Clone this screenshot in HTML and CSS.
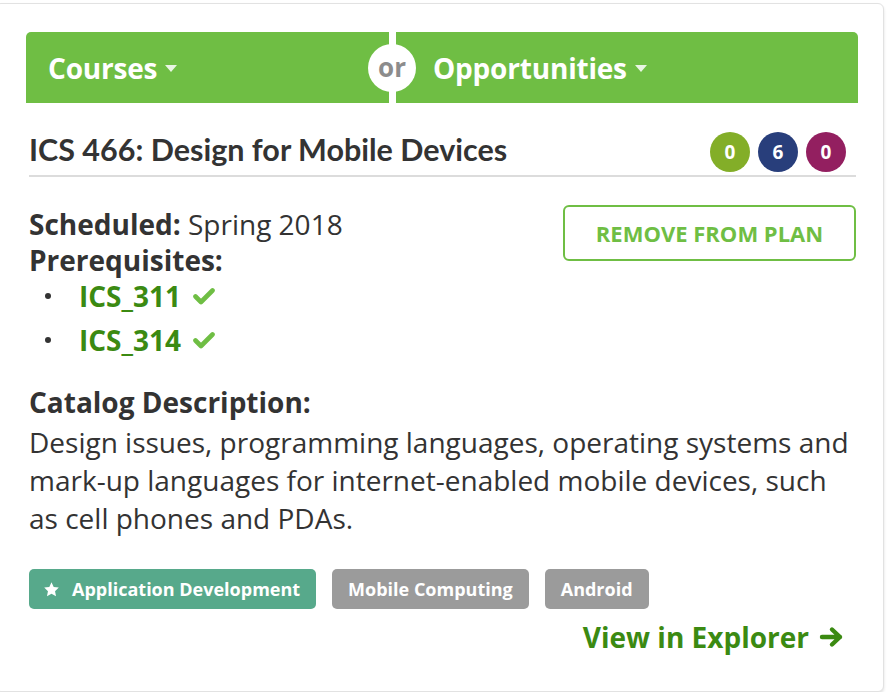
FILE: index.html
```html
<!DOCTYPE html>
<html lang="en">
<head>
<meta charset="utf-8">
<title>ICS 466</title>
<link rel="stylesheet" href="styles.css">
</head>
<body>
<div class="card">
  <div class="switcher">
    <div class="seg seg-left">Courses <span class="caret"></span></div>
    <div class="seg seg-right">Opportunities <span class="caret"></span></div>
    <div class="or">or</div>
  </div>
  <div class="content">
    <div class="title-row">
      <h2 class="title">ICS 466: Design for Mobile Devices</h2>
      <div class="counts">
        <span class="count c-green">0</span>
        <span class="count c-navy">6</span>
        <span class="count c-plum">0</span>
      </div>
    </div>
    <div class="details">
      <div class="meta">
        <div class="line"><b>Scheduled:</b> Spring 2018</div>
        <div class="line"><b>Prerequisites:</b></div>
        <ul class="prereqs">
          <li><a class="course-link">ICS_311</a><svg class="check" viewBox="0 0 24 18" width="24" height="18"><polyline points="3.5,9.5 9,15 20.5,3.5" fill="none" stroke="#6fbe44" stroke-width="4.6" stroke-linecap="round" stroke-linejoin="round"/></svg></li>
          <li><a class="course-link">ICS_314</a><svg class="check" viewBox="0 0 24 18" width="24" height="18"><polyline points="3.5,9.5 9,15 20.5,3.5" fill="none" stroke="#6fbe44" stroke-width="4.6" stroke-linecap="round" stroke-linejoin="round"/></svg></li>
        </ul>
      </div>
      <button class="remove-btn">REMOVE FROM PLAN</button>
    </div>
    <div class="desc">
      <div class="line"><b>Catalog Description:</b></div>
      <p class="desc-text">Design issues, programming languages, operating systems and mark-up languages for internet-enabled mobile devices, such as cell phones and PDAs.</p>
    </div>
    <div class="tags">
      <span class="tag tag-interest"><svg class="star" viewBox="0 0 24 24" width="17" height="17"><path d="M12 1.8l3.1 6.6 7.2.9-5.3 5 1.4 7.1L12 17.9l-6.4 3.5 1.4-7.1-5.3-5 7.2-.9z" fill="#fff"/></svg>Application Development</span>
      <span class="tag">Mobile Computing</span>
      <span class="tag">Android</span>
    </div>
    <div class="explorer-row">
      <a class="explorer">View in Explorer <svg class="arrow" viewBox="0 0 26 22" width="26" height="22"><path d="M3 11h18M13 3.5l8 7.5-8 7.5" fill="none" stroke="#3b8a12" stroke-width="4.4" stroke-linecap="round" stroke-linejoin="round"/></svg></a>
    </div>
  </div>
</div>
</body>
</html>
```

FILE: styles.css
```css
* { box-sizing: border-box; }
html, body { margin: 0; padding: 0; background: #fff; }
body { font-family: "Open Sans", "Liberation Sans", sans-serif; color: #333; }

.card {
  width: 889px;
  margin: 3px 0 0 -5px;
  height: 689px;
  background: #fff;
  border: 1px solid #e2e2e2;
  border-radius: 6px;
  box-shadow: 0 2px 3px rgba(0,0,0,0.12);
  padding: 28px 25px 0 30px;
}

.switcher {
  position: relative;
  display: flex;
  height: 71px;
  gap: 7px;
}
.seg {
  background: #6fbe44;
  color: #fff;
  font-weight: 700;
  font-size: 28px;
  display: flex;
  align-items: center;
  letter-spacing: -0.2px;
}
.seg-left { width: 363px; padding-left: 22px; border-radius: 5px 0 0 0; }
.seg-right { flex: 1; padding-left: 37px; border-radius: 0 5px 0 0; }
.caret {
  display: inline-block;
  width: 0; height: 0;
  margin-left: 8px;
  margin-top: 2px;
  border-left: 6px solid transparent;
  border-right: 6px solid transparent;
  border-top: 7px solid rgba(255,255,255,0.85);
}
.or {
  position: absolute;
  left: 342px;
  top: 12px;
  width: 48px;
  height: 48px;
  border-radius: 50%;
  background: #fff;
  color: #8c8c8c;
  font-weight: 700;
  font-size: 26px;
  display: flex;
  align-items: center;
  justify-content: center;
  padding-bottom: 3px;
}

.content { margin: 0 2px 0 3px; }

.title-row {
  display: flex;
  align-items: center;
  justify-content: space-between;
  margin-top: 29px;
  padding-bottom: 3px;
  border-bottom: 2px solid #dcdcdc;
}
.title {
  margin: 0 0 7px;
  font-family: Lato, "Open Sans", sans-serif;
  font-weight: 700;
  font-size: 30.5px;
  line-height: 30px;
  color: #333;
}
.counts { display: flex; gap: 8px; margin-right: 10px; }
.count {
  width: 40px; height: 40px;
  border-radius: 50%;
  color: #fff;
  font-weight: 700;
  font-size: 19px;
  display: flex; align-items: center; justify-content: center;
}
.c-green { background: #83ae28; }
.c-navy { background: #283e7b; }
.c-plum { background: #931f60; }

.details {
  display: flex;
  justify-content: space-between;
  align-items: flex-start;
  margin-top: 29px;
}
.line { font-size: 28px; line-height: 36px; }
.line b { font-weight: 700; }
.prereqs { list-style: none; margin: 0; padding: 0; }
.prereqs li {
  display: flex;
  align-items: center;
  font-size: 28px;
  line-height: 36px;
  margin-bottom: 8px;
}
.prereqs li::before {
  content: "";
  width: 6px; height: 6px;
  border-radius: 50%;
  background: #333;
  margin: 0 28px 0 16px;
}
.course-link { color: #3b8a12; font-weight: 700; }
.check { margin-left: 11px; }

.remove-btn {
  width: 293px;
  height: 56px;
  margin-top: -1px;
  background: #fff;
  border: 2px solid #6fbe44;
  border-radius: 6px;
  color: #6fbe44;
  font-family: "Open Sans", sans-serif;
  font-weight: 700;
  font-size: 22px;
}

.desc { margin-top: 18px; }
.desc-text { margin: 3px 0 0; font-size: 28px; line-height: 38px; }

.tags { display: flex; gap: 16px; margin-top: 32px; }
.tag {
  display: inline-flex;
  align-items: center;
  height: 40px;
  padding: 0 16px;
  border-radius: 5px;
  background: #9b9b9b;
  color: #fff;
  font-weight: 700;
  font-size: 18px;
}
.tag-interest { background: #57a98b; padding-left: 14px; }
.star { margin-right: 12px; }

.explorer-row { display: flex; justify-content: flex-end; margin-top: 10px; }
.explorer {
  color: #3b8a12;
  font-weight: 700;
  font-size: 28px;
  line-height: 36px;
  display: inline-flex;
  align-items: center;
  margin-right: 11px;
}
.arrow { margin-left: 10px; }
```
